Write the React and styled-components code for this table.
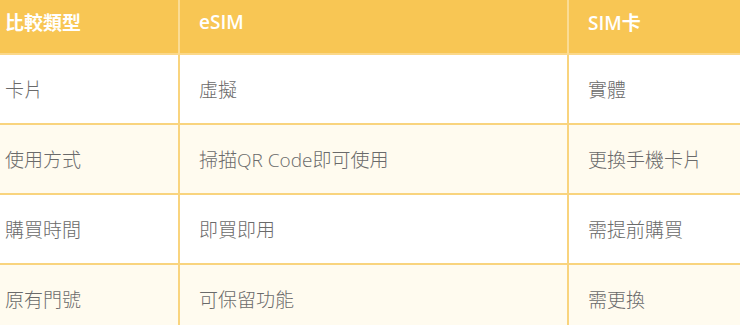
import React from "react";
import styled, { createGlobalStyle } from "styled-components";

const GlobalStyle = createGlobalStyle`
  body {
    margin: 0;
    background: #ffffff;
    font-family: "Open Sans", "Noto Sans CJK TC", sans-serif;
  }
`;

const Table = styled.div`
  display: grid;
  grid-template-columns: 178px 389px 1fr;
  width: 740px;
  overflow: hidden;
`;

const HeadCell = styled.div`
  display: flex;
  align-items: center;
  box-sizing: border-box;
  height: 55px;
  padding-left: ${(p) => (p.first ? "5px" : "19px")};
  padding-bottom: 10px;
  background-color: #f8c654;
  color: #ffffff;
  font-size: 19px;
  font-weight: 600;
  border-left: ${(p) => (p.first ? "none" : "2px solid #fbdc94")};
  border-bottom: 2px solid #fbd88a;
`;

const Cell = styled.div`
  display: flex;
  align-items: center;
  box-sizing: border-box;
  height: 70px;
  padding-left: ${(p) => (p.first ? "5px" : "19px")};
  background-color: ${(p) => (p.striped ? "#fffbef" : "#ffffff")};
  color: #6a6a6a;
  font-size: 19px;
  font-weight: 300;
  border-left: ${(p) => (p.first ? "none" : "2px solid #f9d47e")};
  border-bottom: 2px solid #f9d47e;
`;

const heads = ["比較類型", "eSIM", "SIM卡"];

const rows = [
  ["卡片", "虛擬", "實體"],
  ["使用方式", "掃描QR Code即可使用", "更換手機卡片"],
  ["購買時間", "即買即用", "需提前購買"],
  ["原有門號", "可保留功能", "需更換"],
];

function App() {
  return (
    <>
      <GlobalStyle />
      <Table>
        {heads.map((h, i) => (
          <HeadCell key={h} first={i === 0}>
            {h}
          </HeadCell>
        ))}
        {rows.map((row, r) =>
          row.map((c, i) => (
            <Cell key={r + "-" + i} first={i === 0} striped={r % 2 === 1}>
              {c}
            </Cell>
          ))
        )}
      </Table>
    </>
  );
}

export default App;
